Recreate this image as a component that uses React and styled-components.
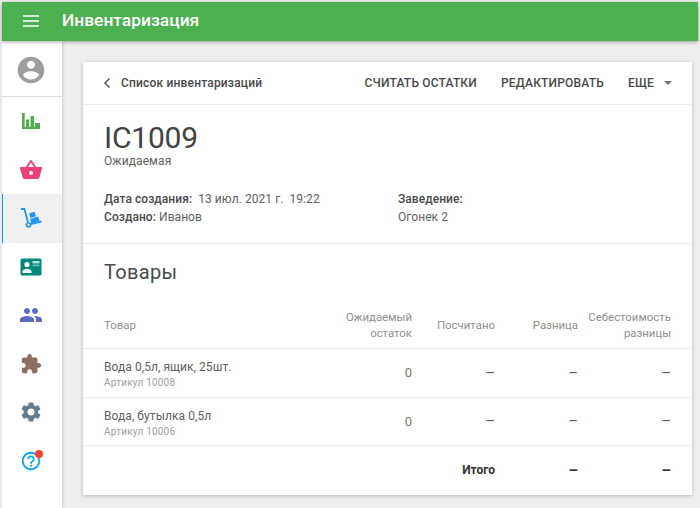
import React from 'react'
import styled, { createGlobalStyle } from 'styled-components'

const GlobalStyle = createGlobalStyle`
  html, body {
    margin: 0;
    padding: 0;
    background: #eeeeee;
    font-family: Roboto, "Liberation Sans", sans-serif;
  }
  * { box-sizing: border-box; }
`

const Page = styled.div`
  width: 700px;
  height: 508px;
  padding: 2px 2px 0;
  overflow: hidden;
  display: flex;
  flex-direction: column;
`

const TopBar = styled.header`
  z-index: 2;
  flex: none;
  display: flex;
  align-items: center;
  height: 39px;
  padding: 0 0 1px 20px;
  background: #4caf50;
  color: #fff;
  box-shadow: 0 1px 4px rgba(0, 0, 0, .35);
`

const Burger = styled.svg`
  width: 18px;
  height: 18px;
  margin-right: 22px;
`

const AppTitle = styled.h1`
  margin: 0;
  font-size: 17.4px;
  font-weight: 500;
  line-height: 1;
`

const Body = styled.div`
  flex: 1;
  display: flex;
  min-height: 0;
`

const Sidebar = styled.nav`
  flex: none;
  width: 60px;
  background: #fff;
  box-shadow: 1px 0 3px rgba(0, 0, 0, .15);
`

const Profile = styled.div`
  display: flex;
  align-items: center;
  justify-content: center;
  height: 56px;
  padding: 2px 2px 0 0;
  border-bottom: 1px solid #e0e0e0;
  color: #9e9e9e;
`

const NavItem = styled.div`
  display: flex;
  align-items: center;
  justify-content: center;
  height: 48.5px;
  padding-right: 2px;
  color: ${p => p.$color};
  background: ${p => (p.$active ? '#f0f0f0' : 'transparent')};
  box-shadow: ${p => (p.$active ? 'inset 1px 0 #03a9f4' : 'none')};
`

const Icon = styled.svg`
  width: ${p => p.$size || 24}px;
  height: ${p => p.$size || 24}px;
  fill: currentColor;
`

const HelpWrap = styled.span`
  position: relative;
  display: flex;
`

const Dot = styled.span`
  position: absolute;
  top: 0;
  right: -1px;
  width: 8px;
  height: 8px;
  border-radius: 50%;
  background: #f44336;
`

const Content = styled.main`
  flex: 1;
  padding: 21px 6px 0 21px;
`

const Card = styled.section`
  height: 433px;
  background: #fff;
  color: #4a4a4a;
  box-shadow: 0 1px 4px rgba(0, 0, 0, .22);
`

const CardBar = styled.div`
  display: flex;
  align-items: center;
  height: 43px;
  padding: 0 20px;
  border-bottom: 1px solid #eeeeee;
`

const BackLink = styled.a`
  display: flex;
  align-items: center;
  gap: 10px;
  font-size: 12px;
  font-weight: 500;
  letter-spacing: .18px;
  color: #4a4a4a;
`

const Actions = styled.div`
  margin-left: auto;
  display: flex;
  align-items: center;
  gap: 24px;
`

const ActionButton = styled.button`
  display: flex;
  align-items: center;
  padding: 0;
  border: 0;
  background: none;
  font: 500 12px Roboto, sans-serif;
  letter-spacing: .18px;
  color: #4a4a4a;
`

const Caret = styled.span`
  width: 0;
  height: 0;
  margin-left: 10px;
  border-left: 4.5px solid transparent;
  border-right: 4.5px solid transparent;
  border-top: 4.5px solid #757575;
`

const Head = styled.div`
  padding: 18px 20px 17px 21px;
  border-bottom: 1px solid #eeeeee;
`

const Code = styled.h2`
  margin: 0 0 1px;
  font-size: 30px;
  font-weight: 400;
  line-height: 30px;
  letter-spacing: -.2px;
  color: #424242;
`

const Status = styled.div`
  font-size: 12px;
  line-height: 14px;
  letter-spacing: .1px;
  color: #616161;
`

const Meta = styled.div`
  display: grid;
  grid-template-columns: 294px 1fr;
  margin-top: 23px;
  font-size: 12px;
  line-height: 17.5px;
  letter-spacing: .06px;
  color: #616161;
`

const Label = styled.b`
  font-weight: 500;
  color: #4a4a4a;
`

const Section = styled.h3`
  margin: 0;
  padding: 15px 21px 0;
  font-size: 20px;
  font-weight: 400;
  line-height: 26px;
  letter-spacing: .3px;
  color: #4a4a4a;
`

const Table = styled.table`
  width: 100%;
  margin-top: 17px;
  border-collapse: collapse;
  table-layout: fixed;
  font-size: 12px;
`

const Th = styled.th`
  height: 46px;
  padding: 0 ${p => p.$pr || 0}px 0 ${p => (p.$left ? 21 : 0)}px;
  font-size: 11.4px;
  font-weight: 400;
  line-height: 16px;
  color: #8f8f8f;
  text-align: ${p => (p.$left ? 'left' : 'right')};
`

const Row = styled.tr`
  height: ${p => p.$h}px;
  border-top: 1px solid #eeeeee;
`

const Td = styled.td`
  padding: 0 ${p => p.$pr || 0}px 0 0;
  text-align: right;
  font-size: 15px;
  color: #616161;
  vertical-align: middle;
`

const ItemCell = styled.td`
  padding: 4px 0 0 21px;
  text-align: left;
  vertical-align: middle;
`

const ZeroCell = styled(Td)`
  font-size: 13px;
  color: #757575;
`

const TotalCell = styled(Td)`
  font-size: ${p => (p.$label ? 12 : 15)}px;
  font-weight: 700;
  color: #333333;
`

const Name = styled.div`
  font-size: 12px;
  line-height: 16px;
  letter-spacing: .06px;
  color: #616161;
`

const Sku = styled.div`
  margin-top: 1px;
  font-size: 10px;
  line-height: 14px;
  letter-spacing: .2px;
  color: #a0a0a0;
`

const items = [
  { name: 'Вода 0,5л, ящик, 25шт.', sku: 'Артикул 10008', h: 49 },
  { name: 'Вода, бутылка 0,5л', sku: 'Артикул 10006', h: 48 },
]

const paths = {
  account: 'M12 2C6.48 2 2 6.48 2 12s4.48 10 10 10 10-4.48 10-10S17.52 2 12 2zm0 3c1.66 0 3 1.34 3 3s-1.34 3-3 3-3-1.34-3-3 1.34-3 3-3zm0 14.2c-2.5 0-4.71-1.28-6-3.22.03-1.99 4-3.08 6-3.08 1.99 0 5.97 1.09 6 3.08-1.29 1.94-3.5 3.22-6 3.22z',
  basket: 'M17.21 9l-4.38-6.56c-.19-.28-.51-.42-.83-.42-.32 0-.64.14-.83.43L6.79 9H2c-.55 0-1 .45-1 1 0 .09.01.18.04.27l2.54 9.27c.23.84 1 1.46 1.92 1.46h13c.92 0 1.69-.62 1.93-1.46l2.54-9.27L23 10c0-.55-.45-1-1-1h-4.79zM9 9l3-4.4L15 9H9zm3 8c-1.1 0-2-.9-2-2s.9-2 2-2 2 .9 2 2-.9 2-2 2z',
  people: 'M16 11c1.66 0 2.99-1.34 2.99-3S17.66 5 16 5c-1.66 0-3 1.34-3 3s1.34 3 3 3zm-8 0c1.66 0 2.99-1.34 2.99-3S9.66 5 8 5C6.34 5 5 6.34 5 8s1.34 3 3 3zm0 2c-2.33 0-7 1.17-7 3.5V19h14v-2.5c0-2.33-4.67-3.5-7-3.5zm8 0c-.29 0-.62.02-.97.05 1.16.84 1.97 1.97 1.97 3.45V19h6v-2.5c0-2.33-4.67-3.5-7-3.5z',
  extension: 'M20.5 11H19V7c0-1.1-.9-2-2-2h-4V3.5C13 2.12 11.88 1 10.5 1S8 2.12 8 3.5V5H4c-1.1 0-1.99.9-1.99 2v3.8H3.5c1.49 0 2.7 1.21 2.7 2.7s-1.21 2.7-2.7 2.7H2V20c0 1.1.9 2 2 2h3.8v-1.5c0-1.49 1.21-2.7 2.7-2.7 1.49 0 2.7 1.21 2.7 2.7V22H17c1.1 0 2-.9 2-2v-4h1.5c1.38 0 2.5-1.12 2.5-2.5S21.88 11 20.5 11z',
  settings: 'M19.14 12.94c.04-.3.06-.61.06-.94 0-.32-.02-.64-.07-.94l2.03-1.58c.18-.14.23-.41.12-.61l-1.92-3.32c-.12-.22-.37-.29-.59-.22l-2.39.96c-.5-.38-1.03-.7-1.62-.94l-.36-2.54c-.04-.24-.24-.41-.48-.41h-3.84c-.24 0-.43.17-.47.41l-.36 2.54c-.59.24-1.13.57-1.62.94l-2.39-.96c-.22-.08-.47 0-.59.22L2.74 8.87c-.12.21-.08.47.12.61l2.03 1.58c-.05.3-.09.63-.09.94s.02.64.07.94l-2.03 1.58c-.18.14-.23.41-.12.61l1.92 3.32c.12.22.37.29.59.22l2.39-.96c.5.38 1.03.7 1.62.94l.36 2.54c.05.24.24.41.48.41h3.84c.24 0 .44-.17.47-.41l.36-2.54c.59-.24 1.13-.56 1.62-.94l2.39.96c.22.08.47 0 .59-.22l1.92-3.32c.12-.22.07-.47-.12-.61l-2.01-1.58zM12 15.6c-1.98 0-3.6-1.62-3.6-3.6s1.62-3.6 3.6-3.6 3.6 1.62 3.6 3.6-1.62 3.6-3.6 3.6z',
  help: 'M11 18h2v-2h-2v2zm1-16C6.48 2 2 6.48 2 12s4.48 10 10 10 10-4.48 10-10S17.52 2 12 2zm0 18c-4.41 0-8-3.59-8-8s3.59-8 8-8 8 3.59 8 8-3.59 8-8 8zm0-14c-2.21 0-4 1.79-4 4h2c0-1.1.9-2 2-2s2 .9 2 2c0 2-3 1.75-3 5h2c0-2.25 3-2.5 3-5 0-2.21-1.79-4-4-4z',
}

const Glyph = ({ name, size }) => (
  <Icon viewBox="0 0 24 24" $size={size}>
    <path d={paths[name]} />
  </Icon>
)

const Chart = () => (
  <Icon viewBox="0 0 24 24">
    <path d="M3 4h2.700v14H7v-7.500h3V18h1.500V7h3.500v11H16v-4h5v6H3z" />
  </Icon>
)

// тележка рисуется отдельно, в пакетах такой нет
const Dolly = () => (
  <Icon viewBox="0 0 24 24">
    <path d="M2 3h3.400l3.600 13.500" fill="none" stroke="currentColor" strokeWidth="1.800" />
    <circle cx="9.500" cy="18.800" r="2.100" fill="none" stroke="currentColor" strokeWidth="1.600" />
    <path d="M11.500 18l11-2.500" fill="none" stroke="currentColor" strokeWidth="2" />
    <path d="M10 7.500l5.500-1.800 1.500 4.500-5.500 1.800zM11 13l8-2.500 1.500 4.300-8 2.500z" />
  </Icon>
)

const ContactCard = () => (
  <Icon viewBox="0 0 24 24">
    <rect x="1.500" y="3.500" width="21" height="17" rx="1.500" />
    <circle cx="8" cy="9.500" r="2.600" fill="#fff" />
    <path d="M3.500 18v-1.500c0-1.800 3-2.800 4.500-2.800s4.500 1 4.500 2.800V18z" fill="#fff" />
    <rect x="13.500" y="6" width="7" height="2.400" fill="#fff" fillOpacity=".75" />
    <rect x="13.500" y="9.500" width="7" height="1.800" fill="#fff" fillOpacity=".4" />
  </Icon>
)

export default function App() {
  return (
    <Page>
      <GlobalStyle />
      <TopBar>
        <Burger viewBox="0 0 18 18">
          <path d="M1 4h16M1 9h16M1 14h16" stroke="#fff" strokeWidth="1.700" />
        </Burger>
        <AppTitle>Инвентаризация</AppTitle>
      </TopBar>
      <Body>
        <Sidebar>
          <Profile><Glyph name="account" size={32} /></Profile>
          <NavItem $color="#4caf50"><Chart /></NavItem>
          <NavItem $color="#ec407a"><Glyph name="basket" /></NavItem>
          <NavItem $color="#2196f3" $active><Dolly /></NavItem>
          <NavItem $color="#00897b"><ContactCard /></NavItem>
          <NavItem $color="#5c6bc0"><Glyph name="people" /></NavItem>
          <NavItem $color="#8d6e63"><Glyph name="extension" size={22} /></NavItem>
          <NavItem $color="#607d8b"><Glyph name="settings" /></NavItem>
          <NavItem $color="#03a9f4">
            <HelpWrap><Glyph name="help" size={22} /><Dot /></HelpWrap>
          </NavItem>
        </Sidebar>
        <Content>
          <Card>
            <CardBar>
              <BackLink>
                <svg width="8" height="12" viewBox="0 0 8 12">
                  <path d="M6.500 1.500L2 6l4.500 4.500" fill="none" stroke="#616161" strokeWidth="1.600" />
                </svg>
                Список инвентаризаций
              </BackLink>
              <Actions>
                <ActionButton>СЧИТАТЬ ОСТАТКИ</ActionButton>
                <ActionButton>РЕДАКТИРОВАТЬ</ActionButton>
                <ActionButton>ЕЩЕ<Caret /></ActionButton>
              </Actions>
            </CardBar>
            <Head>
              <Code>IC1009</Code>
              <Status>Ожидаемая</Status>
              <Meta>
                <div><Label>Дата создания:</Label>&nbsp; 13 июл. 2021 г.&nbsp; 19:22</div>
                <div><Label>Заведение:</Label></div>
                <div><Label>Создано:</Label> Иванов</div>
                <div>Огонек 2</div>
              </Meta>
            </Head>
            <Section>Товары</Section>
            <Table>
              <colgroup>
                <col style={{ width: 260 }} />
                <col style={{ width: 69 }} />
                <col style={{ width: 83 }} />
                <col style={{ width: 83 }} />
                <col />
              </colgroup>
              <thead>
                <tr>
                  <Th $left>Товар</Th>
                  <Th>Ожидаемый<br />остаток</Th>
                  <Th>Посчитано</Th>
                  <Th>Разница</Th>
                  <Th $pr={21}>Себестоимость<br />разницы</Th>
                </tr>
              </thead>
              <tbody>
                {items.map(item => (
                  <Row key={item.sku} $h={item.h}>
                    <ItemCell>
                      <Name>{item.name}</Name>
                      <Sku>{item.sku}</Sku>
                    </ItemCell>
                    <ZeroCell>0</ZeroCell>
                    <Td>–</Td>
                    <Td>–</Td>
                    <Td $pr={21}>–</Td>
                  </Row>
                ))}
                <Row $h={49}>
                  <Td />
                  <Td />
                  <TotalCell $label>Итого</TotalCell>
                  <TotalCell>–</TotalCell>
                  <TotalCell $pr={21}>–</TotalCell>
                </Row>
              </tbody>
            </Table>
          </Card>
        </Content>
      </Body>
    </Page>
  )
}
